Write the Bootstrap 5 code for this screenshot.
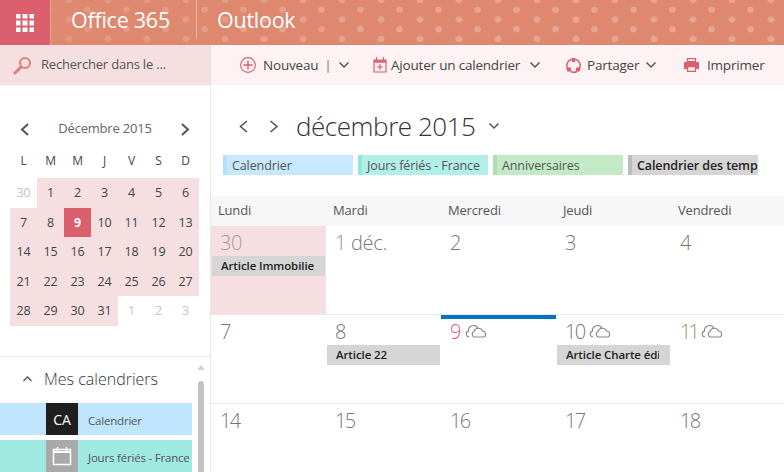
<!doctype html>
<html lang="fr"><head><meta charset="utf-8"><title>Outlook</title>
<link href="https://cdn.jsdelivr.net/npm/bootstrap@5.3.0/dist/css/bootstrap.min.css" rel="stylesheet">
<style>
html,body{height:472px;overflow:hidden}
body{font-family:"Open Sans","Liberation Sans",sans-serif;font-size:13px;color:#333;background:#fff;letter-spacing:-.2px}
.shell{width:784px;height:472px;overflow:hidden}
.topbar{height:45px;background-color:#de8870;background-image:linear-gradient(to right,rgba(222,136,112,.55),rgba(222,136,112,0) 420px),radial-gradient(circle,#e8a593 3px,transparent 3.5px),radial-gradient(circle,#e8a593 3px,transparent 3.5px);background-size:auto,39px 19.5px,39px 19.5px;background-position:0 0,10.5px -9.75px,29px 0;color:#fff}
.launcher{width:51px;height:45px;background:#dc5f6e;border-right:1px solid #e9a79c}
.brand{width:146px;height:39px;font-size:21.5px;padding-left:20px;border-right:1px solid #eeb3a3;line-height:39px;letter-spacing:-.25px}
.product{font-size:21.5px;padding-left:20px;line-height:39px;letter-spacing:-.25px}
.toolstrip{height:40px;background:#fdf3f4}
.searcher{width:211px;height:40px;background:#f5dfe0;padding-left:13px;gap:9px;color:#555;font-size:13px}
.cmd{position:absolute;top:0;height:40px;white-space:nowrap;gap:6px;color:#444;font-size:13.5px}
.actions{position:relative;flex:1;height:40px}
.cmd-new{left:29px}.cmd-add{left:162px;gap:4px}.cmd-share{left:355px}.cmd-print{left:473px}
.cmd-add>svg:last-child{margin-left:5px}
.nudge{margin-left:1px}
.body-row{height:387px}
.sidenav{width:211px;height:387px;border-right:1px solid #e8e8e8;position:relative;flex:none}
.mini-head{height:30px;margin-top:29px;padding:0 19px 0 19px;color:#666;font-size:13px}
.mini-grid{display:grid;grid-template-columns:repeat(7,27px);margin:0 0 0 10px;text-align:center}
.mini-dow{height:34px;line-height:34px;font-size:12px;color:#444}
.mini-day{height:29.6px;line-height:29px;font-size:12.5px;color:#444;background:#f5dfe0}
.mini-off{background:#fff;color:#c4c4c4}
.mini-now{background:#dc5f6e;color:#fff;font-weight:700}
.cal-section{position:absolute;left:0;right:0;top:271px;bottom:0;border-top:1px solid #e8e8e8}
.cal-title{height:46px;padding-left:23px;padding-bottom:2px;gap:12px;font-size:16px;font-weight:300;color:#333;letter-spacing:0}
.cal-line{width:192px;height:32px;margin-bottom:5px;font-size:11.5px;color:#555;white-space:nowrap}
.cal-line>span{padding-top:3px}
.cal-blue{background:#bfe6fd}.cal-aqua{background:#9fe9e1}
.cal-avatar{width:32px;height:32px;margin-left:46px;margin-right:10px;color:#fff;font-size:14px;flex:none}
.av-dark{background:#1f1f1f}.av-gray{background:#a9a9a9}
.vscroll{position:absolute;left:198px;top:24px;bottom:0;width:6px;background:#c2c2c2;border-radius:3px 3px 0 0}
.vscroll-up{position:absolute;left:197px;top:4px;width:0;height:0;border:4px solid transparent;border-bottom:5px solid #d5d5d5}
.mainpane{flex:1;min-width:0}
.month-head{height:70px;padding-left:28px;padding-top:12px;color:#333}
.next-gap{margin-left:20px}
.month-name{font-size:26px;font-weight:300;margin-left:17px;line-height:36px;letter-spacing:-.45px}
.month-caret{margin-left:12px}
.chips{height:20px;margin-left:12px;gap:5px}
.chip{width:130px;height:20px;line-height:21px;font-size:12.5px;padding-left:5px;color:#555;border-left:4px solid;overflow:hidden;white-space:nowrap;letter-spacing:-.1px}
.chip-a{background:#c8e9fd;border-color:#b5e0fc}
.chip-b{background:#b2efe8;border-color:#92e6dd}
.chip-c{background:#c3e9c6;border-color:#ace0b0}
.chip-d{background:#d5d5d5;border-color:#bdbdbd;color:#222;font-weight:600}
.dow-row{display:grid;grid-template-columns:repeat(5,115px);height:30px;margin-top:21px;background:#f7f7f7;line-height:29px;color:#555;width:573px;font-size:13px}
.dow-row>div{padding-left:7px}
.weeks{display:grid;grid-template-columns:repeat(5,115px);grid-auto-rows:89px;width:575px}
.daycell{position:relative;border-bottom:1px solid #e8e8e8;padding-left:9px;font-size:20px;font-weight:300;line-height:34px;color:#777;letter-spacing:-.3px}
.day-first{background:#f5dfe0;color:#a99}
.day-today{color:#dc5f6e}
.num-one{color:#a98b80}
.num-tight{letter-spacing:-1.6px}
.num-tighter{letter-spacing:-3px}
.bar-today{position:absolute;left:0;right:0;top:0;height:4px;background:#0072c6}
.weather{display:inline-block;margin-left:4px;vertical-align:1px}
.evt{position:absolute;left:1px;right:1px;top:30px;height:20px;line-height:20px;font-size:11.5px;font-weight:600;color:#222;background:#d5d5d5;padding:0 11px 0 9px;letter-spacing:-.1px}
.evt-text{white-space:nowrap;overflow:hidden}
</style></head>
<body>
<div class="shell d-flex flex-column">
 <header class="topbar d-flex">
  <div class="launcher d-flex align-items-center justify-content-center">
   <svg width="18" height="18" viewBox="0 0 18 18" fill="#fff"><path d="M0 0h4.500v4.500H0zM6.500 0h5v4.500h-5zM13.500 0H18v4.500h-4.500zM0 6.500h4.500v5H0zM6.500 6.500h5v5h-5zM13.500 6.500H18v5h-4.500zM0 13.500h4.500V18H0zM6.500 13.500h5V18h-5zM13.500 13.500H18V18h-4.500z"/></svg>
  </div>
  <div class="brand">Office 365</div>
  <div class="product">Outlook</div>
 </header>
 <div class="toolstrip d-flex">
  <div class="searcher d-flex align-items-center">
   <svg width="19" height="19" viewBox="0 0 19 19" fill="none" stroke="#e07f78" stroke-width="2"><circle cx="12" cy="7" r="5"/><path d="M8 11l-6 6" stroke-width="3" stroke-linecap="round"/></svg>
   <span>Rechercher dans le ...</span>
  </div>
  <div class="actions">
   <div class="cmd cmd-new d-flex align-items-center">
    <svg width="16" height="16" viewBox="0 0 16 16" fill="none" stroke="#dc5f6e" stroke-width="1.100"><circle cx="8" cy="8" r="7.400"/><path d="M8 3.500v9M3.500 8h9" stroke-width="1.500"/></svg>
    <span class="nudge">Nouveau</span><span class="text-secondary">|</span>
    <svg width="12" height="8" viewBox="0 0 12 8" fill="none" stroke="#555" stroke-width="1.500"><path d="M1.500 1.500L6 6l4.500-4.500"/></svg>
   </div>
   <div class="cmd cmd-add d-flex align-items-center">
    <svg width="14" height="16" viewBox="0 0 14 16" fill="none" stroke="#dc5f6e" stroke-width="1.200"><path d="M1 3h12v12H1z"/><path d="M1 4.500h12" stroke-width="2.500"/><path d="M3.500 0v3M10.500 0v3M7 7v6M4 10h6"/></svg>
    <span>Ajouter un calendrier</span>
    <svg width="12" height="8" viewBox="0 0 12 8" fill="none" stroke="#555" stroke-width="1.500"><path d="M1.500 1.500L6 6l4.500-4.500"/></svg>
   </div>
   <div class="cmd cmd-share d-flex align-items-center">
    <svg width="15" height="15" viewBox="0 0 15 15" fill="none" stroke="#dc5f6e" stroke-width="1.500"><path d="M5 1.500A6.200 6.200 0 0 0 2 11M5 13.500a6.200 6.200 0 0 0 6 0M13 11a6.200 6.200 0 0 0-3-9.500"/><circle cx="3" cy="11.500" r="1.600" fill="#dc5f6e"/><circle cx="12" cy="11.500" r="1.600" fill="#dc5f6e"/><circle cx="7.500" cy="1.800" r="1.600" fill="#dc5f6e"/></svg>
    <span>Partager</span>
    <svg width="12" height="8" viewBox="0 0 12 8" fill="none" stroke="#555" stroke-width="1.500"><path d="M1.500 1.500L6 6l4.500-4.500"/></svg>
   </div>
   <div class="cmd cmd-print d-flex align-items-center gap-2">
    <svg width="15" height="14" viewBox="0 0 15 14"><path fill="#dc5f6e" d="M0 4h15v7h-3V8H3v3H0z"/><path fill="none" stroke="#dc5f6e" stroke-width="1.200" d="M3.500.6h8V3.500h-8zM3.600 8.600h7.800v4.800H3.600z"/></svg>
    <span>Imprimer</span>
   </div>
  </div>
 </div>
 <div class="body-row d-flex">
  <aside class="sidenav">
   <div class="mini-head d-flex align-items-center justify-content-between">
    <svg width="11" height="13" viewBox="0 0 11 13" fill="none" stroke="#555" stroke-width="2"><path d="M9 1L3 6.500 9 12"/></svg>
    <span>Décembre 2015</span>
    <svg width="11" height="13" viewBox="0 0 11 13" fill="none" stroke="#555" stroke-width="2"><path d="M2 1l6 5.500L2 12"/></svg>
   </div>
   <div class="mini-grid">
    <div class="mini-dow">L</div><div class="mini-dow">M</div><div class="mini-dow">M</div><div class="mini-dow">J</div><div class="mini-dow">V</div><div class="mini-dow">S</div><div class="mini-dow">D</div>
    <div class="mini-day mini-off">30</div><div class="mini-day">1</div><div class="mini-day">2</div><div class="mini-day">3</div><div class="mini-day">4</div><div class="mini-day">5</div><div class="mini-day">6</div>
    <div class="mini-day">7</div><div class="mini-day">8</div><div class="mini-day mini-now">9</div><div class="mini-day">10</div><div class="mini-day">11</div><div class="mini-day">12</div><div class="mini-day">13</div>
    <div class="mini-day">14</div><div class="mini-day">15</div><div class="mini-day">16</div><div class="mini-day">17</div><div class="mini-day">18</div><div class="mini-day">19</div><div class="mini-day">20</div>
    <div class="mini-day">21</div><div class="mini-day">22</div><div class="mini-day">23</div><div class="mini-day">24</div><div class="mini-day">25</div><div class="mini-day">26</div><div class="mini-day">27</div>
    <div class="mini-day">28</div><div class="mini-day">29</div><div class="mini-day">30</div><div class="mini-day">31</div><div class="mini-day mini-off">1</div><div class="mini-day mini-off">2</div><div class="mini-day mini-off">3</div>
   </div>
   <div class="cal-section">
    <div class="vscroll-up"></div><div class="vscroll"></div>
    <div class="cal-title d-flex align-items-center">
     <svg width="9" height="6" viewBox="0 0 9 6" fill="none" stroke="#555" stroke-width="1.300"><path d="M.5 5l4-4 4 4"/></svg>
     <span>Mes calendriers</span>
    </div>
    <div class="cal-line cal-blue d-flex align-items-center"><div class="cal-avatar av-dark d-flex align-items-center justify-content-center">CA</div><span>Calendrier</span></div>
    <div class="cal-line cal-aqua d-flex align-items-center"><div class="cal-avatar av-gray d-flex align-items-center justify-content-center">
     <svg width="20" height="20" viewBox="0 0 20 20" fill="none" stroke="#fff" stroke-width="1.500"><path d="M1.500 3.500h17v15h-17z"/><path d="M1 6h18" stroke-width="2"/><path d="M5.500 1v4M14.500 1v4"/></svg>
    </div><span>Jours fériés - France</span></div>
   </div>
  </aside>
  <main class="mainpane">
   <div class="month-head d-flex align-items-center">
    <svg width="10" height="13" viewBox="0 0 10 13" fill="none" stroke="#555" stroke-width="1.600"><path d="M8 1L1.500 6.500 8 12"/></svg>
    <svg class="next-gap" width="10" height="13" viewBox="0 0 10 13" fill="none" stroke="#555" stroke-width="1.600"><path d="M1.500 1L8 6.500 1.500 12"/></svg>
    <span class="month-name">décembre 2015</span>
    <svg class="month-caret" width="12" height="8" viewBox="0 0 12 8" fill="none" stroke="#555" stroke-width="1.500"><path d="M1.500 1.500L6 6l4.500-4.500"/></svg>
   </div>
   <div class="chips d-flex">
    <div class="chip chip-a">Calendrier</div><div class="chip chip-b">Jours fériés - France</div><div class="chip chip-c">Anniversaires</div><div class="chip chip-d">Calendrier des temps</div>
   </div>
   <div class="dow-row"><div>Lundi</div><div>Mardi</div><div>Mercredi</div><div>Jeudi</div><div>Vendredi</div></div>
   <div class="weeks">
    <div class="daycell day-first">30<div class="evt"><div class="evt-text">Article Immobilier</div></div></div>
    <div class="daycell"><span class="num-one">1</span> déc.</div>
    <div class="daycell">2</div><div class="daycell">3</div><div class="daycell">4</div>
    <div class="daycell">7</div>
    <div class="daycell">8<div class="evt"><div class="evt-text">Article 22</div></div></div>
    <div class="daycell day-today"><div class="bar-today"></div>9<svg class="weather" width="23" height="14" viewBox="0 0 23 14" fill="none" stroke="#888" stroke-width="1.100"><path d="M4 13a3 3 0 0 1-.500-5.900A5 5 0 0 1 13 4.500"/><path d="M9 13a3 3 0 0 1 0-5.500 4.500 4.500 0 0 1 8.500-.500A3.200 3.200 0 0 1 19 13z"/></svg></div>
    <div class="daycell"><span class="num-tight">10</span><svg class="weather" width="23" height="14" viewBox="0 0 23 14" fill="none" stroke="#888" stroke-width="1.100"><path d="M4 13a3 3 0 0 1-.500-5.900A5 5 0 0 1 13 4.500"/><path d="M9 13a3 3 0 0 1 0-5.500 4.500 4.500 0 0 1 8.500-.500A3.200 3.200 0 0 1 19 13z"/></svg><div class="evt"><div class="evt-text">Article Charte édition</div></div></div>
    <div class="daycell"><span class="num-tighter num-one">11</span><svg class="weather" width="23" height="14" viewBox="0 0 23 14" fill="none" stroke="#888" stroke-width="1.100"><path d="M4 13a3 3 0 0 1-.500-5.900A5 5 0 0 1 13 4.500"/><path d="M9 13a3 3 0 0 1 0-5.500 4.500 4.500 0 0 1 8.500-.500A3.200 3.200 0 0 1 19 13z"/></svg></div>
    <div class="daycell"><span class="num-tight">14</span></div><div class="daycell"><span class="num-tight">15</span></div><div class="daycell"><span class="num-tight">16</span></div><div class="daycell"><span class="num-tight">17</span></div><div class="daycell"><span class="num-tight">18</span></div>
   </div>
  </main>
 </div>
</div>
<script src="https://cdn.jsdelivr.net/npm/bootstrap@5.3.0/dist/js/bootstrap.bundle.min.js"></script>
</body></html>
